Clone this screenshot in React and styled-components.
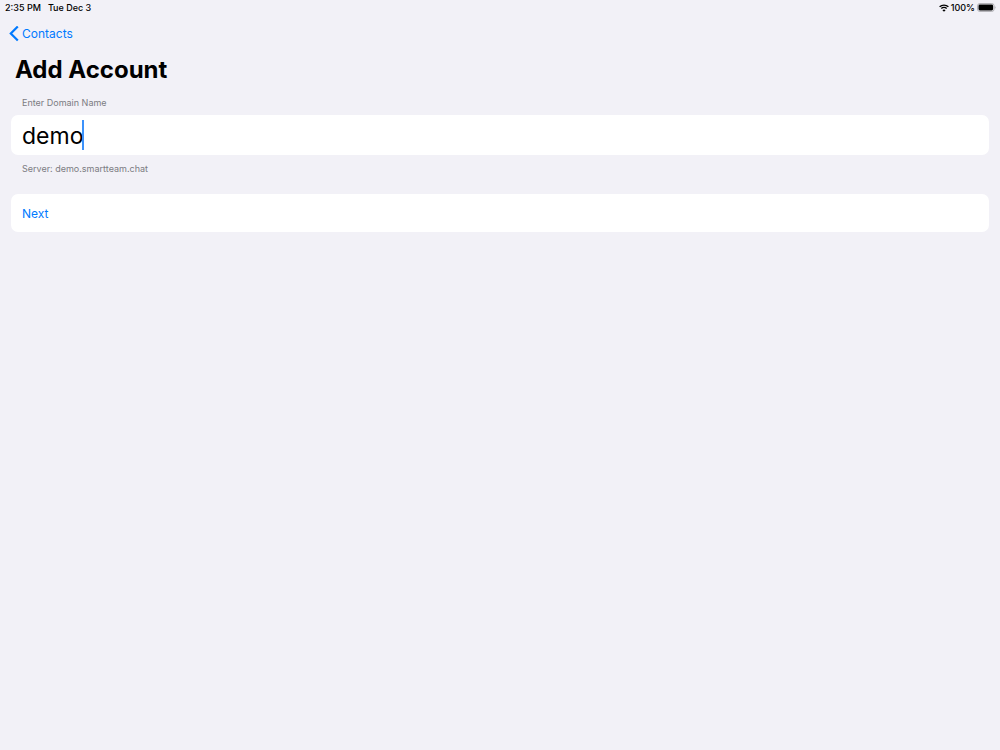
import React, { useState } from "react";
import styled, { createGlobalStyle } from "styled-components";

const GlobalStyle = createGlobalStyle`
  * { box-sizing: border-box; }
  body {
    margin: 0;
    background: #f2f1f7;
    color: #000;
    font-family: Inter, "Liberation Sans", sans-serif;
  }
`;

const Page = styled.div`
  min-height: 100vh;
`;

const StatusBar = styled.header`
  display: flex;
  align-items: center;
  justify-content: space-between;
  height: 15px;
  padding: 0 4px 0 5px;
  font-size: 9px;
  line-height: 15px;
  font-weight: 500;
`;

const StatusGroup = styled.div`
  display: flex;
  align-items: center;
  gap: ${({ $gap }) => $gap}px;
`;

const NavBar = styled.nav`
  display: flex;
  align-items: center;
  height: 37px;
  padding: 0 9px;
`;

const BackLink = styled.a`
  display: flex;
  align-items: center;
  gap: 3px;
  color: #007aff;
  font-size: 12px;
  line-height: 20px;
  text-decoration: none;
`;

const Title = styled.h1`
  margin: 0;
  padding: 0 15px;
  font-size: 24px;
  line-height: 36px;
  font-weight: 700;
`;

const Form = styled.form`
  display: flex;
  flex-direction: column;
  padding: 8px 11px;
`;

const Label = styled.label`
  padding: 0 11px;
  color: #7c7c82;
  font-size: 9px;
  line-height: 14px;
`;

const Hint = styled.p`
  margin: 7px 0 18px;
  padding: 0 11px;
  color: #7c7c82;
  font-size: 9px;
  line-height: 14px;
`;

const Field = styled.div`
  display: flex;
  align-items: center;
  height: 40px;
  margin-top: 5px;
  padding: 0 11px;
  border-radius: 7px;
  background: #fff;
`;

const DomainInput = styled.input`
  field-sizing: content;
  max-width: 100%;
  padding: 2px 0 0;
  border: 0;
  outline: 0;
  background: transparent;
  color: #000;
  caret-color: transparent;
  font: 400 23px/30px Inter, "Liberation Sans", sans-serif;
`;

const Caret = styled.span`
  width: 2px;
  height: 30px;
  margin-left: -1px;
  background: #3c92fb;
`;

const NextButton = styled.button`
  width: 100%;
  height: 38px;
  padding: 2px 11px 0;
  border: 0;
  border-radius: 7px;
  background: #fff;
  color: #007aff;
  font: 400 12px/20px Inter, "Liberation Sans", sans-serif;
  text-align: left;
`;

const WifiIcon = () => (
  <svg width="10" height="8" viewBox="0 0 20 16" fill="none" stroke="#000" aria-hidden="true">
    <path d="M1.2 5.7C6.1 .9 13.9 .9 18.8 5.7" strokeWidth="2.7" />
    <path d="M4.6 9.2C7.6 6.3 12.4 6.3 15.4 9.2" strokeWidth="2.7" />
    <path d="M10 15.5L6.9 12.3C8.6 10.7 11.4 10.7 13.1 12.3Z" fill="#000" stroke="none" />
  </svg>
);

const BatteryIcon = () => (
  <svg width="19" height="9" viewBox="0 0 19 9" aria-hidden="true">
    <rect x=".5" y=".5" width="16.6" height="8" rx="2.4" fill="none" stroke="#a4a4a8" strokeWidth=".8" />
    <rect x="1.5" y="1.5" width="14.6" height="6" rx="1.4" fill="#000" />
    <path d="M17.9 3.2C18.8 3.6 18.8 5.4 17.9 5.8Z" fill="#a4a4a8" />
  </svg>
);

const BackIcon = () => (
  <svg width="10" height="16" viewBox="0 0 10 16" fill="none" stroke="#007aff" aria-hidden="true">
    <path d="M8.8 .5L1.8 7.5L8.8 14.5" strokeWidth="2.2" />
  </svg>
);

export default function App() {
  const [domain, setDomain] = useState("demo");
  return (
    <Page>
      <GlobalStyle />
      <StatusBar>
        <StatusGroup $gap={7}>
          <span>2:35 PM</span>
          <span>Tue Dec 3</span>
        </StatusGroup>
        <StatusGroup $gap={2}>
          <WifiIcon />
          <span>100%</span>
          <BatteryIcon />
        </StatusGroup>
      </StatusBar>
      <NavBar>
        <BackLink href="#contacts">
          <BackIcon />
          Contacts
        </BackLink>
      </NavBar>
      <main>
        <Title>Add Account</Title>
        <Form onSubmit={(e) => e.preventDefault()}>
          <Label htmlFor="domain">Enter Domain Name</Label>
          <Field>
            <DomainInput
              id="domain"
              value={domain}
              spellCheck={false}
              autoComplete="off"
              aria-describedby="server"
              onChange={(e) => setDomain(e.target.value)}
            />
            <Caret />
          </Field>
          <Hint id="server">Server: {domain}.smartteam.chat</Hint>
          <NextButton type="submit">Next</NextButton>
        </Form>
      </main>
    </Page>
  );
}
